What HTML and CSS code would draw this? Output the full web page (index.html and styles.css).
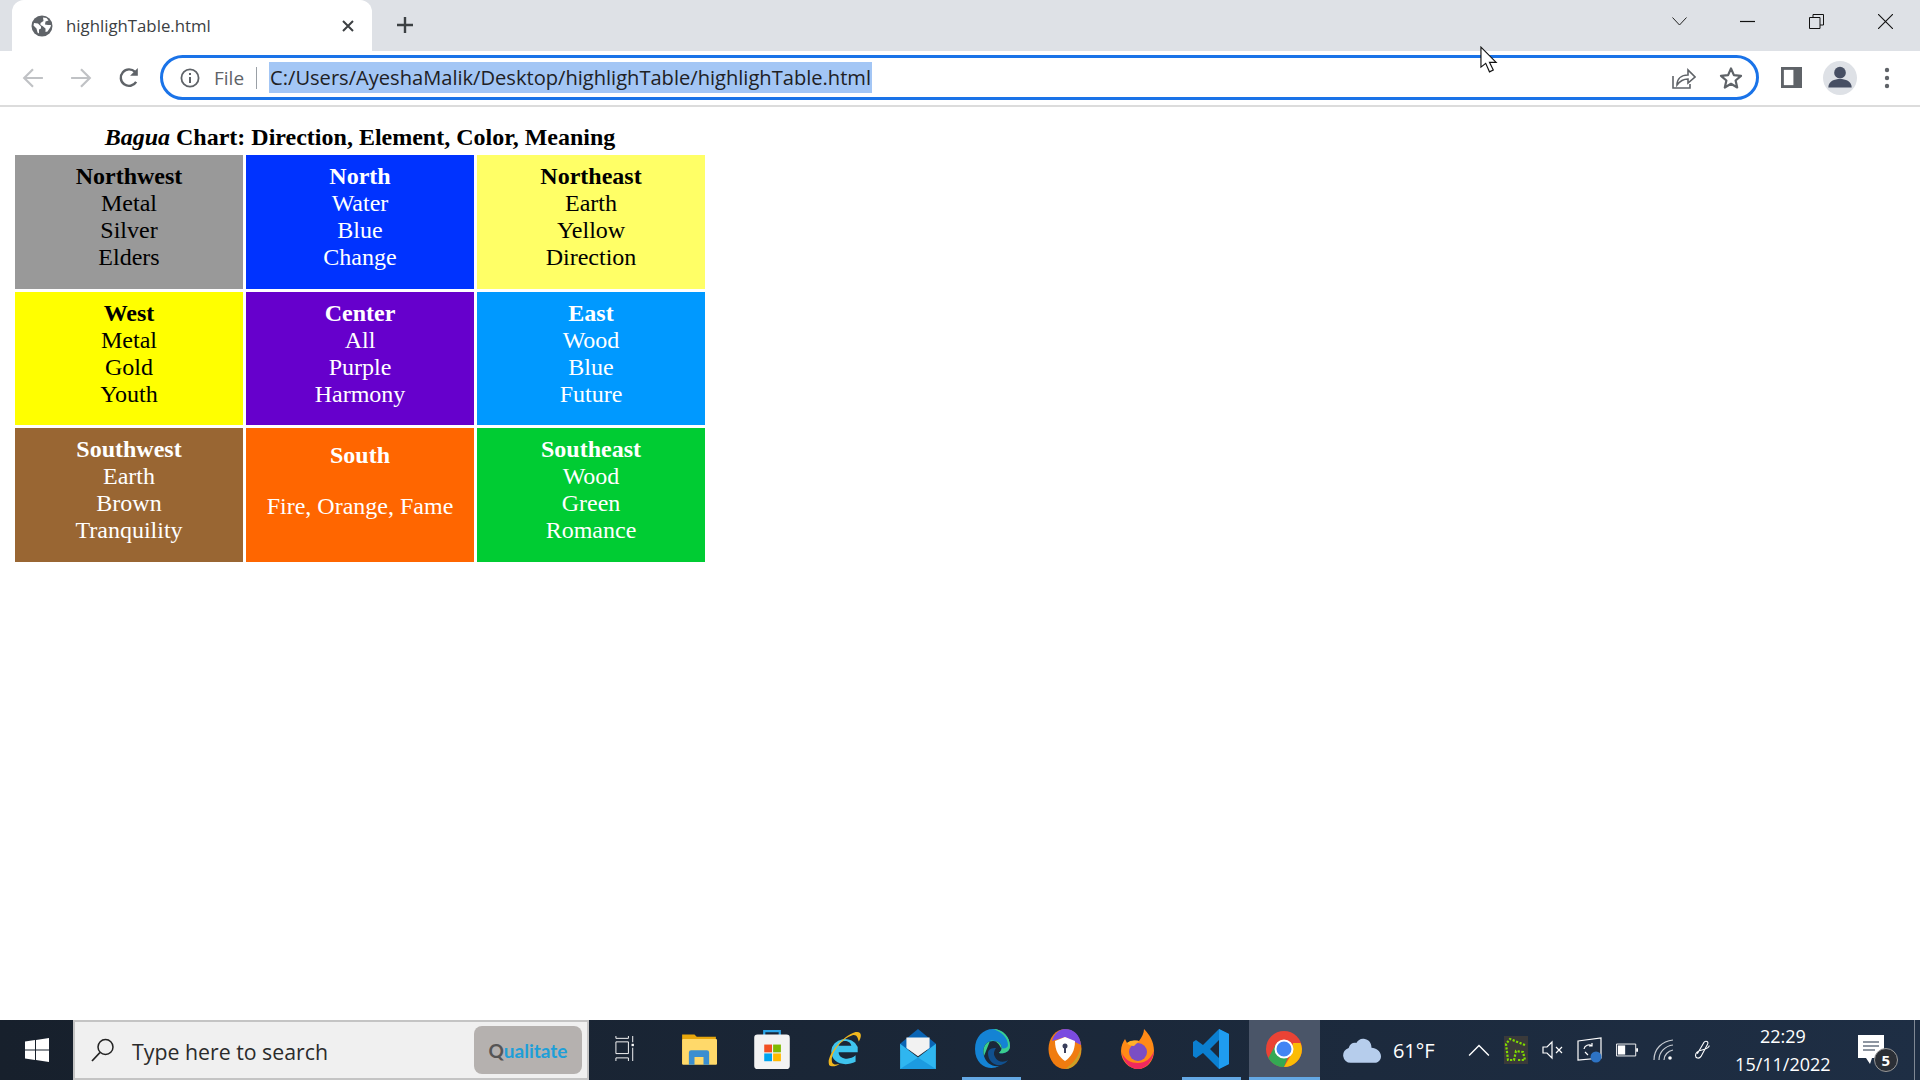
FILE: index.html
```html
<!DOCTYPE html>
<html lang="en">

<head>
    <meta charset="UTF-8">
    <title>highlighTable.html</title>
    <link rel="stylesheet" href="styles.css">
</head>

<body>
    <div class="browser">
        <div class="tab-strip">
            <div class="tab">
                <svg class="tab-icon" viewBox="0 0 22 22"><circle cx="11" cy="11" r="10.5" fill="#5f6368"/><path d="M3 8l4 .5 3 3v2l-2 1v4l-1.5-1-1-4-3-3zM12 2.5l3.5.5 2 2.5-3 1-.5 3 3 .5 3 0-.5 2-3 4.5-2 .5 0-3.5-3-2.5-2-1 0-2 3-2z" fill="#fff"/></svg>
                <span class="tab-title">highlighTable.html</span>
                <svg class="tab-close" viewBox="0 0 14 14"><path d="M2 2l10 10M12 2L2 12" stroke="#3c4043" stroke-width="2"/></svg>
            </div>
            <svg class="new-tab" viewBox="0 0 20 20"><path d="M10 2v16M2 10h16" stroke="#3c4043" stroke-width="2.4"/></svg>
            <div class="window-controls">
                <svg class="win-btn tab-search" viewBox="0 0 15 9"><path d="M.5 .5l7 7.5 7-7.5" fill="none" stroke="#222" stroke-width="1"/></svg>
                <svg class="win-btn win-min" viewBox="0 0 15 15"><path d="M0 7.5h15" stroke="#111" stroke-width="1.2"/></svg>
                <svg class="win-btn win-max" viewBox="0 0 15 15"><path d="M.5 3.5h10.500v11H.5zM4 3.5V.5h10.500V11H11" fill="none" stroke="#111"/></svg>
                <svg class="win-btn win-close" viewBox="0 0 15 15"><path d="M0 0l15 15M15 0L0 15" stroke="#111" stroke-width="1.1"/></svg>
            </div>
        </div>
        <div class="toolbar">
            <svg class="nav-icon nav-back" viewBox="0 0 20 20"><path d="M19 10H2M10 2l-8 8 8 8" fill="none" stroke="#c0c2c5" stroke-width="2"/></svg>
            <svg class="nav-icon nav-forward" viewBox="0 0 20 20"><path d="M1 10h17M10 2l8 8-8 8" fill="none" stroke="#c0c2c5" stroke-width="2"/></svg>
            <svg class="nav-icon nav-reload" viewBox="0 0 20 20"><path d="M16.5 13.5A7.5 7.5 0 1 1 15.5 4.5" fill="none" stroke="#5f6368" stroke-width="2.2"/><path d="M18 1v7h-7z" fill="#5f6368"/></svg>
            <div class="omnibox">
                <svg class="info-icon" viewBox="0 0 20 20"><circle cx="10" cy="10" r="8.6" fill="none" stroke="#5f6368" stroke-width="1.8"/><path d="M10 9v6M10 5v2" stroke="#5f6368" stroke-width="2"/></svg>
                <span class="scheme">File</span>
                <span class="omni-sep"></span>
                <span class="url">C:/Users/AyeshaMalik/Desktop/highlighTable/highlighTable.html</span>
                <svg class="share-icon" viewBox="0 0 24 22"><path d="M1 9v12h17v-4" fill="none" stroke="#5f6368" stroke-width="1.6"/><path d="M5 18c0-6 4-10 11-10V3l7 7-7 6v-4c-5 0-8 2-11 6z" fill="none" stroke="#5f6368" stroke-width="1.6"/></svg>
                <svg class="star-icon" viewBox="0 0 24 24"><path d="M12 2.5l2.9 6.6 7.100.7-5.400 4.700 1.600 7-6.200-3.700-6.200 3.700 1.600-7L2 9.800l7.100-.7z" fill="none" stroke="#5f6368" stroke-width="2.2" stroke-linejoin="round"/></svg>
            </div>
            <svg class="panel-icon" viewBox="0 0 22 22"><path d="M0 0h22v22H0z" fill="#5f6368"/><path d="M3 3h10v16H3z" fill="#fff"/></svg>
            <div class="avatar">
                <svg viewBox="0 0 32 32"><circle cx="16" cy="11" r="5.5" fill="#474f63"/><path d="M5 25c0-6 6-8 11-8s11 2 11 8z" fill="#474f63"/></svg>
            </div>
            <svg class="menu-icon" viewBox="0 0 6 22"><circle cx="3" cy="3" r="2.2" fill="#5f6368"/><circle cx="3" cy="11" r="2.2" fill="#5f6368"/><circle cx="3" cy="19" r="2.2" fill="#5f6368"/></svg>
        </div>
    </div>

    <div class="page">
        <table class="bagua">
            <caption><em>Bagua</em> Chart: Direction, Element, Color, Meaning</caption>
            <tbody>
                <tr>
                    <td class="nw"><b>Northwest</b><br>Metal<br>Silver<br>Elders</td>
                    <td class="n"><b>North</b><br>Water<br>Blue<br>Change</td>
                    <td class="ne"><b>Northeast</b><br>Earth<br>Yellow<br>Direction</td>
                </tr>
                <tr>
                    <td class="w"><b>West</b><br>Metal<br>Gold<br>Youth</td>
                    <td class="c"><b>Center</b><br>All<br>Purple<br>Harmony</td>
                    <td class="e"><b>East</b><br>Wood<br>Blue<br>Future</td>
                </tr>
                <tr>
                    <td class="sw"><b>Southwest</b><br>Earth<br>Brown<br>Tranquility</td>
                    <td class="s"><p class="south-head"><b>South</b></p><p class="south-text">Fire, Orange, Fame</p></td>
                    <td class="se"><b>Southeast</b><br>Wood<br>Green<br>Romance</td>
                </tr>
            </tbody>
        </table>
    </div>

    <div class="taskbar">
        <div class="start">
            <svg viewBox="0 0 24 24"><path d="M0 3.5l10-1.400v9.400H0zM11 2l13-2v11.500H11zM0 12.500h10v9.400L0 20.500zM11 12.500h13V24l-13-2z" fill="#fff"/></svg>
        </div>
        <div class="search">
            <svg class="search-icon" viewBox="0 0 24 24"><circle cx="14.5" cy="9" r="7.5" fill="none" stroke="#222" stroke-width="1.5"/><path d="M9 14.500L1 23" stroke="#222" stroke-width="1.8"/></svg>
            <span class="search-text">Type here to search</span>
            <div class="search-badge"><span class="q">Q</span>ualitate</div>
        </div>
        <div class="task-item">
            <svg class="icon-task" viewBox="0 0 24 32"><path d="M1 0v3h16V0M1 7.500h16v15H1zM1 32v-4h16v4M22.500 0v8M22.500 15v17" fill="none" stroke="#fff" stroke-width="1.2"/><rect x="21" y="10" width="3" height="3" fill="#fff"/></svg>
        </div>
        <div class="task-item">
            <svg class="icon-app" viewBox="0 0 32 32"><path d="M1 3h11l2 2h17v24H1z" fill="#e8a70c"/><rect x="1" y="7" width="31" height="23" rx="1" fill="#ffd96a"/><path d="M7 30V19a2 2 0 0 1 2-2h14a2 2 0 0 1 2 2v11h-5v-7h-8v7z" fill="#3a8ed0"/></svg>
        </div>
        <div class="task-item">
            <svg class="icon-app" viewBox="0 0 32 36"><path d="M9 6V2h14v4" fill="none" stroke="#2ca5e8" stroke-width="2"/><rect x="0" y="5" width="32" height="31" rx="3" fill="#f3f3f3"/><rect x="9" y="14" width="7" height="7" fill="#f25022"/><rect x="17" y="14" width="7" height="7" fill="#7fba00"/><rect x="9" y="22" width="7" height="7" fill="#00a4ef"/><rect x="17" y="22" width="7" height="7" fill="#ffb900"/></svg>
        </div>
        <div class="task-item">
            <svg class="icon-app" viewBox="0 0 34 36"><path d="M4 20a13 12 0 0 1 25-4v5H11c0 7 11 8 16 3v6c-10 5-23 2-23-10z M11 15h12c-1-6-11-6-12 0z" fill="#3fc4ee" fill-rule="evenodd"/><path d="M2 33C-1 26 12 7 27 2c6-1 6 4 3 9-1-4-2-7-6-6C14 8 2 23 5 31c1 2 4 2 7 1-4 3-8 3-10 1z" fill="#f0b71e"/></svg>
        </div>
        <div class="task-item">
            <svg class="icon-app" viewBox="0 0 34 38"><path d="M0 14L17 0l17 14v6H0z" fill="#0a64b4"/><path d="M6 8h22v10l-11 8-11-8z" fill="#f2f2f2"/><path d="M0 14l17 13 17-13v24H0z" fill="#2fb6f0"/><path d="M0 38l17-11 17 11z" fill="#1c9be0"/></svg>
        </div>
        <div class="task-item running">
            <svg class="icon-app" viewBox="0 0 36 40"><path d="M1 20C1 8 9 0 19 0c10 0 17 8 17 17 0 6-6 8-11 7 5-4 3-12-6-12C11 12 8 19 10 27c2 7 8 11 15 10-8 5-24 1-24-17z" fill="#1483d4"/><path d="M10 27c-2-8 1-15 9-15 9 0 11 8 6 12 5 1 11-1 11-7C36 8 29 0 19 0 28 3 34 9 34 16c0 3-4 4-7 3-2-4-6-9-11-7" fill="#3bcf8d"/><path d="M14 24c0 8 6 13 13 12 3-1 6-3 7-5-4 3-11 2-13-3-2-3-1-6 1-9-4 0-8 1-8 5z" fill="#10508f"/></svg>
        </div>
        <div class="task-item">
            <svg class="icon-app" viewBox="0 0 34 40"><ellipse cx="17" cy="20" rx="16.5" ry="20" fill="#f07c10"/><path d="M17 0c9 0 15 6 16 16L17 8 4 12C6 5 11 0 17 0z" fill="#7b4be0"/><path d="M33 18c1 10-6 22-16 22 6-4 13-10 16-22z" fill="#c9a227"/><path d="M17 8l10 4c0 10-4 16-10 20C11 28 7 22 7 12z" fill="#fff"/><circle cx="17" cy="17" r="2.5" fill="#3a3f5c"/><path d="M16 18h2v6h-2z" fill="#3a3f5c"/></svg>
        </div>
        <div class="task-item">
            <svg class="icon-app" viewBox="0 0 34 40"><path d="M23 0c5 5 10 12 10 22 0 10-7 18-16 18S0 32 0 22c0-5 2-9 4-12l2 4c3-2 8-3 12-2 3-4 5-8 5-12z" fill="#ff8a16"/><path d="M1 24c1 9 8 16 16 16s15-8 16-18c-3 8-9 12-16 12-7 0-13-3-16-10z" fill="#f0295f"/><circle cx="17" cy="23" r="9" fill="#7a4ec4"/><path d="M6 14c3-3 8-3 12-2l-5 5c-3 0-6-1-7-3z" fill="#ffb02a"/></svg>
        </div>
        <div class="task-item running">
            <svg class="icon-app" viewBox="0 0 36 40"><path d="M26 0l10 5v30l-10 5-16-16-7 5-3-2V13l3-2 7 5zM26 11l-9 9 9 9z" fill="#0b7fd0" fill-rule="evenodd"/><path d="M26 0l10 5v30l-10 5z" fill="#1f9cf0"/></svg>
        </div>
        <div class="task-item current">
            <svg class="icon-app" viewBox="0 0 36 36"><circle cx="18" cy="18" r="18" fill="#ea4335"/><path d="M18 36A18 18 0 0 1 2.400 27L10 13l8 5 6 3z" fill="#34a853"/><path d="M36 18a18 18 0 0 1-18 18l8-14 1-10h7.500A18 18 0 0 1 36 18z" fill="#fbbc05"/><circle cx="18" cy="18" r="8.5" fill="#4285f4" stroke="#fff" stroke-width="2"/></svg>
        </div>
        <div class="weather">
            <svg class="cloud" viewBox="0 0 40 26"><path d="M8 26a8 8 0 0 1-2-15.700C7 6 11 4 14 5c2-3 5-5 9-4 5 1 7 5 7 9 5 0 10 4 10 9 0 4-3 7-7 7z" fill="#b6cdec"/></svg>
            <span class="temp">61°F</span>
        </div>
        <div class="tray">
            <svg class="tray-icon" viewBox="0 0 20 12"><path d="M1 11l9-9 9 9" fill="none" stroke="#fff" stroke-width="1.3"/></svg>
            <svg class="tray-icon tray-green" viewBox="0 0 24 28"><rect width="24" height="28" fill="#3a3a3a"/><path d="M21 9L6 3 2 8l2 16h6l2-9 7 1 2 8-7 0" fill="none" stroke="#7fdc00" stroke-width="2.2" stroke-dasharray="2.2 1.5"/></svg>
            <svg class="tray-icon" viewBox="0 0 22 18"><path d="M1 6h4l5-5v16l-5-5H1z" fill="none" stroke="#fff" stroke-width="1.2"/><path d="M14 6l6 6M20 6l-6 6" stroke="#fff" stroke-width="1.2"/></svg>
            <svg class="tray-icon tray-screen" viewBox="0 0 26 26"><path d="M1 4L24 1v20L1 23z" fill="none" stroke="#fff" stroke-width="1.2"/><path d="M7 12a5 5 0 0 1 8-3M15 6v3h-3M8 15l3 3" fill="none" stroke="#fff" stroke-width="1.2"/><circle cx="19" cy="20" r="5.5" fill="#2d73c4"/></svg>
            <svg class="tray-icon" viewBox="0 0 24 14"><path d="M.5.5h21v13H.5z" fill="none" stroke="#fff"/><path d="M2 2h8v10H2z" fill="#fff"/><path d="M22 5h2v4h-2z" fill="#fff"/></svg>
            <svg class="tray-icon" viewBox="0 0 22 22"><path d="M1 21C1 10 9 2 20 1M6 21c0-8 6-14 14-15M11 21c0-5 4-9 9-10" fill="none" stroke="#c8ccd2" stroke-width="1.2"/><circle cx="17" cy="19" r="1.8" fill="#fff"/></svg>
            <svg class="tray-icon" viewBox="0 0 22 24"><path d="M7 16l7-12c2-3 6-1 4 2l-7 13c-2 3-6 2-6-1 0-3 3-5 7-6 4-1 8-2 8-5" fill="none" stroke="#fff" stroke-width="1.2"/></svg>
        </div>
        <div class="clock">
            <span>22:29</span>
            <span>15/11/2022</span>
        </div>
        <div class="notify">
            <svg class="notify-icon" viewBox="0 0 26 30"><path d="M0 0h26v23H14l-2 6-4-6H0z" fill="#fff"/><path d="M5 7h16M5 11h16M5 15h12" stroke="#1e2e44" stroke-width="1.2"/></svg>
            <span class="notify-count">5</span>
        </div>
        <div class="show-desktop"></div>
    </div>

    <svg class="cursor" viewBox="0 0 20 28"><path d="M1 1v21l5-4 4 9 4-2-4-8h7z" fill="#fff" stroke="#111" stroke-width="1.2" stroke-linejoin="miter"/></svg>
</body>

</html>
```

FILE: styles.css
```css
html,
body {
    margin: 0;
    padding: 0;
}

body {
    width: 1920px;
    height: 1080px;
    overflow: hidden;
    display: flex;
    flex-direction: column;
    background-color: #fff;
    font-family: "Open Sans", "Noto Sans", sans-serif;
}

svg {
    display: block;
    flex: none;
}

/* browser chrome */
.tab-strip {
    height: 51px;
    display: flex;
    align-items: flex-end;
    background-color: #dee1e6;
}

.tab {
    width: 360px;
    height: 51px;
    margin-left: 12px;
    display: flex;
    align-items: center;
    box-sizing: border-box;
    padding: 0 17px 0 19px;
    background-color: #fff;
    border-radius: 12px 12px 0 0;
}

.tab-icon {
    width: 22px;
    height: 22px;
}

.tab-title {
    margin-left: 13px;
    flex: 1;
    font-size: 16.8px;
    color: #3c4043;
}

.tab-close {
    width: 14px;
    height: 14px;
}

.new-tab {
    width: 20px;
    height: 20px;
    margin: 0 0 16px 23px;
}

.window-controls {
    margin-left: auto;
    height: 51px;
    position: relative;
    width: 300px;
}

.win-btn {
    position: absolute;
    top: 14px;
    width: 15px;
    height: 15px;
}

.tab-search {
    left: 52px;
    top: 17px;
    height: 9px;
}

.win-min {
    left: 120px;
}

.win-max {
    left: 189px;
}

.win-close {
    left: 258px;
}

.toolbar {
    height: 56px;
    display: flex;
    align-items: center;
    box-sizing: border-box;
    border-bottom: 2px solid #dcdcdc;
    padding-bottom: 1px;
}

.nav-icon {
    width: 22px;
    height: 22px;
}

.nav-back {
    margin-left: 22px;
}

.nav-forward {
    margin-left: 26px;
}

.nav-reload {
    margin-left: 26px;
}

.omnibox {
    width: 1599px;
    height: 45px;
    margin-left: 20px;
    box-sizing: border-box;
    display: flex;
    align-items: center;
    border: 3px solid #1a73e8;
    border-radius: 23px;
    padding: 0 13px 0 17px;
}

.info-icon {
    width: 20px;
    height: 20px;
}

.scheme {
    margin-left: 14px;
    font-size: 19px;
    color: #5f6368;
}

.omni-sep {
    width: 1px;
    height: 22px;
    margin: 0 12px;
    background-color: #9aa0a6;
}

.url {
    padding: 0 1px;
    margin-right: auto;
    font-size: 20.1px;
    line-height: 31px;
    color: #202124;
    white-space: nowrap;
    background-color: #a3c6f5;
}

.share-icon {
    width: 24px;
    height: 22px;
}

.star-icon {
    width: 24px;
    height: 24px;
    margin-left: 23px;
}

.panel-icon {
    width: 21px;
    height: 21px;
    margin-left: 22px;
}

.avatar {
    width: 34px;
    height: 34px;
    margin-left: 21px;
    border-radius: 50%;
    background-color: #dee1e6;
}

.menu-icon {
    width: 6px;
    height: 22px;
    margin-left: 27px;
}

/* page content */
.page {
    flex: 1;
    padding: 12px 12px 0;
}

.bagua {
    width: 696px;
    table-layout: fixed;
    border-spacing: 3px;
    font-family: "Liberation Serif", "Times New Roman", serif;
    font-size: 24px;
    text-align: center;
}

.bagua caption {
    font-weight: bold;
    padding: 5px 0 1px;
}

.bagua td {
    height: 133.6px;
    box-sizing: border-box;
    padding: 8px 0 0;
    vertical-align: top;
    color: #fff;
    line-height: 27px;
}

.bagua p {
    margin: 0;
}

.bagua .south-head {
    margin-top: 6px;
}

.bagua .south-text {
    margin-top: 24px;
}

.bagua .nw { background-color: #999; color: #000; }
.bagua .n { background-color: #03f; }
.bagua .ne { background-color: #ff6; color: #000; }
.bagua .w { background-color: #ff0; color: #000; }
.bagua .c { background-color: #60c; }
.bagua .e { background-color: #09f; }
.bagua .sw { background-color: #963; }
.bagua .s { background-color: #f60; }
.bagua .se { background-color: #0c3; }

/* windows taskbar */
.taskbar {
    height: 60px;
    display: flex;
    background: linear-gradient(90deg, #17202c, #1e2e44);
    color: #fff;
}

.start {
    width: 73px;
    display: flex;
    align-items: center;
    justify-content: center;
}

.start svg {
    width: 24px;
    height: 24px;
}

.search {
    width: 516px;
    box-sizing: border-box;
    display: flex;
    align-items: center;
    padding: 0 5px 0 16px;
    background-color: #f0f0f0;
    border: 2px solid #c4c4c4;
    color: #2b2b2b;
}

.search-icon {
    width: 24px;
    height: 26px;
}

.search-text {
    flex: 1;
    margin: 2px 0 0 17px;
    font-size: 21.3px;
}

.search-badge {
    width: 108px;
    height: 48px;
    display: flex;
    align-items: center;
    justify-content: center;
    border-radius: 8px;
    background-color: #b5b1af;
    font-family: "Lato", sans-serif;
    font-size: 19px;
    font-weight: bold;
    color: #1e9fd8;
}

.search-badge .q {
    color: #555;
}

.task-item {
    width: 71.2px;
    margin: 0 1px;
    box-sizing: border-box;
    display: flex;
    align-items: center;
    justify-content: center;
    border-bottom: 3px solid transparent;
}

.task-item.running {
    width: 59.2px;
    margin: 0 7px;
    border-bottom-color: #64a8e4;
}

.task-item.current {
    background-color: #4a5568;
    border-bottom-color: #64a8e4;
}

.icon-task {
    width: 23px;
    height: 25px;
    margin-left: -2px;
}

.icon-app {
    width: 36px;
    height: 40px;
}

.weather {
    width: 140px;
    box-sizing: border-box;
    padding-left: 22px;
    display: flex;
    align-items: center;
}

.cloud {
    width: 38px;
    height: 25px;
}

.temp {
    margin-left: 12px;
    font-size: 20px;
}

.tray {
    width: 259px;
    display: grid;
    grid-template-columns: repeat(7, 37px);
    align-items: center;
    justify-items: center;
}

.tray-icon {
    width: 22px;
    height: 22px;
}

.tray-green {
    width: 24px;
    height: 28px;
}

.tray-screen {
    width: 26px;
    height: 26px;
}

.clock {
    width: 126px;
    display: flex;
    flex-direction: column;
    align-items: center;
    justify-content: center;
    gap: 5px;
    font-size: 18px;
    line-height: 23px;
}

.notify {
    width: 50px;
    position: relative;
    display: flex;
    align-items: center;
    justify-content: center;
}

.notify-icon {
    width: 26px;
    height: 30px;
}

.notify-count {
    position: absolute;
    left: 28px;
    top: 28px;
    width: 24px;
    height: 24px;
    box-sizing: border-box;
    border: 1px solid #999;
    border-radius: 50%;
    background-color: #2b2f36;
    text-align: center;
    font-size: 15px;
    line-height: 22px;
    font-weight: bold;
}

.show-desktop {
    flex: 1;
    box-sizing: border-box;
    margin-left: 18px;
    border-left: 1px solid #7f8894;
}

/* mouse pointer lying over the toolbar */
.cursor {
    position: absolute;
    left: 1480px;
    top: 46px;
    width: 19px;
    height: 27px;
}
```
